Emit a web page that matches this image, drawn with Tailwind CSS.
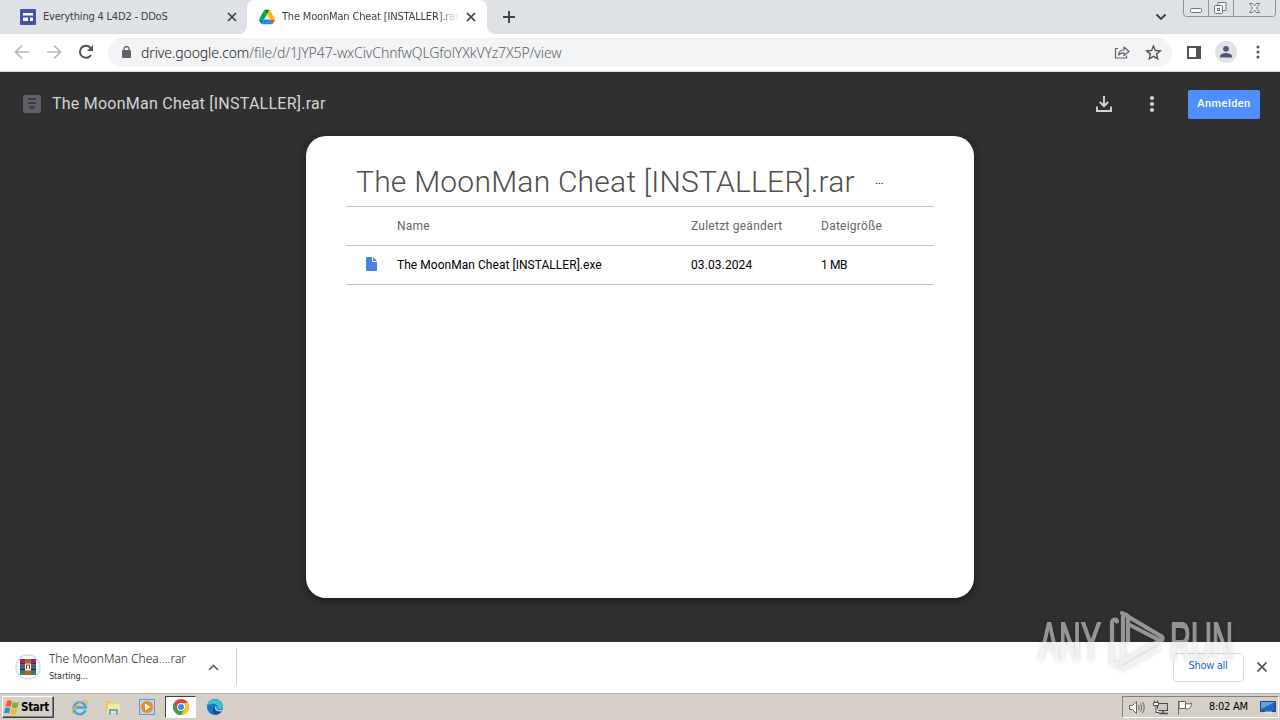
<!DOCTYPE html>
<html lang="de">
<head>
  <meta charset="UTF-8" />
  <meta name="viewport" content="width=device-width, initial-scale=1.0"/>
  <title>The MoonMan Cheat [INSTALLER].rar - Google Drive</title>
  <script src="https://cdn.jsdelivr.net/npm/@tailwindcss/browser@4"></script>
</head>
<body class="relative flex h-[720px] w-[1280px] flex-col overflow-hidden bg-white font-['DejaVu_Sans_Condensed','DejaVu_Sans',sans-serif] text-[#3c4043]">

  <!-- Tabs -->
  <div class="flex h-[34px] shrink-0 bg-[#dee1e6]">
    <div class="flex h-full w-[247px] items-center pl-5">
      <svg class="size-4 shrink-0" viewBox="0 0 16 16">
        <rect width="16" height="16" rx="1" fill="#4351af"/>
        <path d="M3 4h10v2.500H3zM3 8.500h5V12H3zM10 8.500h3V12h-3z" fill="#fff"/>
      </svg>
      <span class="ml-[7px] w-[180px] text-[11px] tracking-[-0.2px] whitespace-nowrap">Everything 4 L4D2 - DDoS</span>
      <svg class="ml-[4px] size-[10px] shrink-0" viewBox="0 0 10 10"><path d="M1 1l8 8M9 1L1 9" stroke="#3c4043" stroke-width="1.700"/></svg>
    </div>
    <div class="relative flex h-full w-[240px] items-center rounded-t-lg bg-white pl-3">
      <svg class="absolute bottom-0 -left-2 size-2" viewBox="0 0 8 8"><path d="M8 0v8H0a8 8 0 0 0 8-8z" fill="#fff"/></svg>
      <svg class="absolute -right-2 bottom-0 size-2" viewBox="0 0 8 8"><path d="M0 0v8h8a8 8 0 0 1-8-8z" fill="#fff"/></svg>
      <svg class="size-4 shrink-0" viewBox="0 0 87.300 78">
        <path d="M6.600 66.850l3.850 6.650c.8 1.400 1.950 2.500 3.300 3.300l13.750-23.800H0c0 1.550.4 3.100 1.200 4.500z" fill="#0066da"/>
        <path d="M43.650 25L29.900 1.200c-1.350.8-2.500 1.900-3.300 3.300L1.200 48.500A9.060 9.060 0 0 0 0 53h27.500z" fill="#00ac47"/>
        <path d="M73.550 76.800c1.350-.8 2.500-1.900 3.300-3.300l9.250-16c.8-1.400 1.200-2.950 1.200-4.500H59.800l5.850 11.500z" fill="#ea4335"/>
        <path d="M43.650 25L57.400 1.200C56.050.4 54.500 0 52.900 0H34.400c-1.600 0-3.150.45-4.500 1.200z" fill="#00832d"/>
        <path d="M59.800 53H27.500L13.750 76.800c1.350.8 2.900 1.200 4.500 1.200h50.800c1.600 0 3.150-.45 4.500-1.200z" fill="#2684fc"/>
        <path d="M73.400 26.500L60.700 4.500c-.8-1.400-1.950-2.500-3.300-3.300L43.650 25 59.800 53h27.450c0-1.550-.4-3.100-1.200-4.500z" fill="#ffba00"/>
      </svg>
      <span class="ml-[7px] w-[177px] overflow-hidden mask-r-from-[155px] mask-r-to-[177px] text-[11px] tracking-[-0.17px] whitespace-nowrap">The MoonMan Cheat [INSTALLER].rar</span>
      <svg class="ml-[7px] size-[10px] shrink-0" viewBox="0 0 10 10"><path d="M1 1l8 8M9 1L1 9" stroke="#3c4043" stroke-width="1.700"/></svg>
    </div>
    <svg class="mt-[11px] ml-[16px] size-3" viewBox="0 0 12 12"><path d="M6 0v12M0 6h12" stroke="#3c4043" stroke-width="1.900"/></svg>
    <svg class="mt-[13px] ml-auto h-2 w-3" viewBox="0 0 12 8"><path d="M1.500 1.500L6 6l4.500-4.500" fill="none" stroke="#3c4043" stroke-width="1.900"/></svg>
    <div class="mt-[-2px] mr-1 ml-4 h-[19px] w-[93px]">
      <svg class="h-[19px] w-[93px]" viewBox="0 0 93 19" fill="none" stroke="#70757e">
        <path d="M.5 0v15.500a3 3 0 0 0 3 3h86a3 3 0 0 0 3-3V0M25.500 0v18M50.500 0v18" stroke="#8d929c"/>
        <rect x="7.500" y="10.500" width="11" height="4" rx="1" fill="#f5f6f8"/>
        <path d="M35 7.500V4.500h8v8h-3" fill="#f5f6f8"/>
        <rect x="31.500" y="7.500" width="8" height="8" rx="1" fill="#f5f6f8"/>
        <rect x="34.500" y="10.500" width="2" height="2"/>
        <path d="M66.500 5.500h3l2 2.500 2-2.500h3l-3 4.500 3 4.500h-3l-2-2.500-2 2.500h-3l3-4.500z" fill="#f5f6f8"/>
      </svg>
    </div>
  </div>

  <!-- Toolbar -->
  <div class="flex h-[38px] shrink-0 items-center border-b border-[#d5d7da] bg-white pb-px pl-[14px]">
    <svg class="size-4" viewBox="0 0 16 16" fill="none" stroke="#b4b6b9" stroke-width="1.700"><path d="M15 8H2M8 1.500L1.500 8 8 14.500"/></svg>
    <svg class="ml-4 size-4" viewBox="0 0 16 16" fill="none" stroke="#b4b6b9" stroke-width="1.700"><path d="M1 8h13M8 1.500L14.500 8 8 14.500"/></svg>
    <svg class="ml-4 size-4" viewBox="0 0 16 16"><path d="M13 11a6 6 0 1 1-.6-7.200" fill="none" stroke="#505458" stroke-width="2"/><path d="M15 1v6H9z" fill="#505458"/></svg>
    <div class="ml-[14px] flex h-[29px] w-[1064px] items-center rounded-full bg-[#f1f3f4] pl-[14px]">
      <svg class="h-3 w-[9px] shrink-0" viewBox="0 0 9 12"><rect y="4" width="9" height="8" rx="1" fill="#5f6368"/><path d="M2 5V3a2.500 2.500 0 0 1 5 0v2" fill="none" stroke="#5f6368" stroke-width="1.300"/></svg>
      <span class="ml-[10px] font-['Noto_Sans',sans-serif] text-[14px] font-light tracking-[-0.11px] whitespace-nowrap text-[#5f6368]"><span class="text-[#202124]">drive.google.com</span>/file/d/1JYP47-wxCivChnfwQLGfolYXkVYz7X5P/view</span>
      <svg class="ml-auto h-4 w-[16px]" viewBox="0 0 16 16" fill="none" stroke="#5f6368" stroke-width="1.200"><path d="M4 4.500H1.500V14h11v-2.500"/><path d="M4.500 11c.4-3.500 2.300-5 5.500-5V3l5 4.500-5 4V8.800c-2.500 0-4 .5-5.500 2.200z" stroke-linejoin="round"/></svg>
      <svg class="mr-[10px] ml-[15px] size-[17px]" viewBox="0 0 17 17"><path d="M8.500 2l1.900 4.500 4.900.4-3.700 3.200 1.100 4.700-4.200-2.500-4.200 2.500 1.100-4.700-3.700-3.200 4.900-.4z" fill="none" stroke="#505458" stroke-width="1.400"/></svg>
    </div>
    <svg class="ml-[15px] h-[13px] w-[14px]" viewBox="0 0 14 13"><path d="M1 1h12v11H1z" fill="none" stroke="#505458" stroke-width="2"/><path d="M9 0h5v13H9z" fill="#505458"/></svg>
    <svg class="ml-[14px] size-[22px]" viewBox="0 0 22 22"><circle cx="11" cy="11" r="11" fill="#dfe2e7"/><circle cx="11" cy="7.800" r="2.900" fill="#4a5776"/><path d="M5 16.500v-1.200c0-2.300 4-3.300 6-3.300s6 1 6 3.300v1.200z" fill="#4a5776"/></svg>
    <svg class="ml-[19px] h-[14px] w-1" viewBox="0 0 4 14" fill="#505458"><circle cx="2" cy="2" r="1.500"/><circle cx="2" cy="7" r="1.500"/><circle cx="2" cy="12" r="1.500"/></svg>
  </div>

  <!-- Drive viewer -->
  <main class="flex h-[570px] shrink-0 flex-col items-center bg-[#303030] font-[Roboto,sans-serif]">
    <div class="flex h-16 w-full shrink-0 items-center pr-5 pl-[23px]">
      <svg class="size-[18px]" viewBox="0 0 18 18"><rect width="18" height="18" rx="2" fill="#5f6368"/><path d="M5 3h8v2H5zM5 7h8v2H5zM5 11h8l-4 4z" fill="#3a3d42"/></svg>
      <span class="ml-[11px] text-[16px] tracking-[0.24px] whitespace-nowrap text-[#d4d4d4]">The MoonMan Cheat [INSTALLER].rar</span>
      <svg class="ml-auto size-4" viewBox="0 0 16 16" fill="none" stroke="#d4d4d4" stroke-width="1.900"><path d="M8 0v10M3.800 6L8 10.200 12.200 6M1 10.500V15h14v-4.500"/></svg>
      <svg class="ml-[38px] h-4 w-1" viewBox="0 0 4 16" fill="#d4d4d4"><circle cx="2" cy="2" r="2"/><circle cx="2" cy="8" r="2"/><circle cx="2" cy="14" r="2"/></svg>
      <button class="ml-[34px] h-[29px] w-[72px] rounded-[2px] bg-[#4d90fe] text-[11px] font-medium tracking-[0.45px] text-white">Anmelden</button>
    </div>
    <section class="h-[462px] w-[668px] rounded-[20px] bg-white px-10 shadow-[0_2px_8px_rgba(0,0,0,0.5)]">
      <div class="flex h-[71px] items-center border-b border-[#c4c4c4] pt-[21px] pl-[10px]">
        <h1 class="w-[501px] text-[30px] font-light tracking-[0.23px] whitespace-nowrap text-[#4e4e4e]">The MoonMan Cheat [INSTALLER].rar</h1>
        <span class="ml-[18px] text-[11px] text-black">...</span>
      </div>
      <div class="grid h-[39px] grid-cols-[294px_130px_1fr] items-center border-b border-[#c4c4c4] pl-[51px] text-[12px] tracking-[0.25px] text-[#666]">
        <span>Name</span><span>Zuletzt geändert</span><span>Dateigröße</span>
      </div>
      <div class="grid h-[39px] grid-cols-[51px_294px_130px_1fr] items-center border-b border-[#c4c4c4] text-[12px] text-black">
        <svg class="mb-0.5 ml-5 h-[14px] w-[11px]" viewBox="0 0 11 14"><path d="M1 0h6l4 4v9a1 1 0 0 1-1 1H1a1 1 0 0 1-1-1V1a1 1 0 0 1 1-1z" fill="#4a7fe5"/><path d="M6.500 0v4.500H11" fill="none" stroke="#fff"/></svg>
        <span class="tracking-[0.04px]">The MoonMan Cheat [INSTALLER].exe</span><span class="tracking-[0.1px]">03.03.2024</span><span class="tracking-[-0.4px]">1 MB</span>
      </div>
    </section>
  </main>

  <!-- Downloads -->
  <div class="flex h-[51px] shrink-0 items-center bg-white pb-px pl-[15px]">
    <svg class="size-[26px]" viewBox="0 0 26 26">
      <circle cx="13" cy="13" r="12" fill="none" stroke="#c5daf8" stroke-width="1.500"/>
      <path d="M5 5h16v5H5z" fill="#a4274c"/><path d="M5 10.500h16v5H5z" fill="#3c5fa5"/><path d="M5 16h16v5H5z" fill="#32824a"/>
      <path d="M10 5h6v16h-6z" fill="#b3622b"/><path d="M5 10h16M5 15.500h16" stroke="#222"/>
      <rect x="10" y="9.500" width="6" height="7" fill="#eee"/><path d="M11.500 15v-4h3v4" fill="none" stroke="#8b3d2b"/>
    </svg>
    <div class="ml-[8px] h-[38px] w-[153px] whitespace-nowrap">
      <div class="pt-px font-['Noto_Sans',sans-serif] text-[12px] leading-[20px] font-light tracking-[-0.01px] text-[#202124]">The MoonMan Chea....rar</div>
      <div class="text-[9px] leading-[15px] tracking-[-0.1px] text-[#303134]">Starting...</div>
    </div>
    <svg class="ml-[6px] h-[7px] w-[11px]" viewBox="0 0 11 7"><path d="M1 6l4.500-4.500L10 6" fill="none" stroke="#5f6368" stroke-width="1.700"/></svg>
    <div class="ml-[17px] h-[38px] w-px bg-[#d0d0d0]"></div>
    <button class="ml-auto h-[29px] w-[71px] rounded border border-[#dadce0] pr-px pb-0.5 text-[11px] tracking-[-0.3px] text-[#1a66cc]">Show all</button>
    <svg class="mr-[13px] ml-[13px] size-[10px]" viewBox="0 0 10 10"><path d="M.5.5l9 9M9.500.5l-9 9" stroke="#505458" stroke-width="1.700"/></svg>
  </div>

  <!-- Taskbar -->
  <footer class="flex h-[27px] shrink-0 items-center border-t border-[#b9b5ae] bg-[#d6cfc7]">
    <div class="ml-0.5 flex h-[22px] w-[52px] items-center border border-[#fff] border-r-[#404040] border-b-[#404040] pl-px shadow-[inset_-1px_-1px_#808080]">
      <svg class="h-[15px] w-4 shrink-0" viewBox="0 0 16 15">
        <path d="M3 1q2-1.500 5 .3L6.500 7Q4 5.500 1.500 6.800z" fill="#e8622c"/>
        <path d="M9 2q3 1.500 6 0l-1.500 5.500q-3 1.300-6 0z" fill="#79b82c"/>
        <path d="M1.200 8q2.500-1.300 5 .2L5 13.500Q2.500 12 0 13.200z" fill="#3f86d2"/>
        <path d="M7.200 8.500q3 1.300 6 .1L12 14q-3 1.200-6-.2z" fill="#f2bb24"/>
      </svg>
      <span class="ml-px pt-px text-[11.500px] font-bold tracking-[-0.3px] text-black">Start</span>
    </div>
    <svg class="ml-[17px] size-[17px]" viewBox="0 0 17 17">
      <path d="M14.500 11A6 6 0 1 1 14.700 8.500H4" fill="none" stroke="#45a5df" stroke-width="2.600"/>
      <path d="M1.500 15.500C-1 12 10 .5 15.500 1.500c1 .5.500 2-.5 3.500" fill="none" stroke="#e5b83b" stroke-width="1.300"/>
    </svg>
    <svg class="ml-[17px] h-4 w-[17px]" viewBox="0 0 17 16">
      <path d="M1 2h5l1 1.500h7V13H1z" fill="#e9c763"/><path d="M3 4.500h12V14H2z" fill="#f8e6a0"/>
      <path d="M4 15.500V10h9v5.500h-2V12H6v3.500z" fill="#5babd8"/>
    </svg>
    <svg class="ml-[17px] size-4" viewBox="0 0 16 16"><rect x=".5" y=".5" width="15" height="15" fill="#b4d5ee" stroke="#6497c4"/><circle cx="8" cy="8" r="6" fill="#f18a20"/><path d="M6 4.500v7L11.500 8z" fill="#fff"/></svg>
    <div class="ml-[10px] flex h-[22px] w-[31px] items-center justify-center border border-[#404040] border-r-white border-b-white bg-white">
      <svg class="size-4" viewBox="0 0 16 16">
        <circle cx="8" cy="8" r="8" fill="#e5402f"/>
        <path d="M1.070 4A8 8 0 0 0 8 16l3.500-6H4.500z" fill="#31a353"/>
        <path d="M14.900 4A8 8 0 0 1 8 16l3.500-6L8 4z" fill="#fcc629"/>
        <circle cx="8" cy="8" r="3.900" fill="#fff"/><circle cx="8" cy="8" r="3" fill="#4285f4"/>
      </svg>
    </div>
    <svg class="ml-[11px] size-4" viewBox="0 0 16 16">
      <circle cx="8" cy="8" r="8" fill="#1678c8"/>
      <path d="M.3 6C2-1 14-2 16 6.500c.3 3-3 4.500-6 3.300 2-2.800-1-5.300-4-5C3 5 1 6 .3 6z" fill="#39c3c9"/>
      <path d="M9 7c-2 2.500-.5 6 5.500 5-1 2-3.500 3.500-5.500 3.800C5 14.500 4.500 9 9 7z" fill="#124f9c"/>
      <path d="M9.300 7.200c-1 3 2 4.800 6.200 3.600l-1 1.500C10 13 7.500 11 8 8z" fill="#d6cfc7"/>
    </svg>
    <div class="mr-px ml-auto flex h-[22px] w-[157px] items-center border border-[#808080] border-r-white border-b-white pl-[6px] text-black">
      <svg class="h-[15px] w-4" viewBox="0 0 16 15" fill="none" stroke="#66625e"><path d="M.5 5.500h3l4-4v12l-4-4h-3z" fill="#fff"/><path d="M9.500 5q1.500 2.500 0 5M11.500 3.500q2.500 4 0 8M13.500 2q3.500 5.500 0 11"/></svg>
      <svg class="ml-2 h-[15px] w-4" viewBox="0 0 16 15" fill="none" stroke="#4c4946"><rect x="4.500" y="3.500" width="10" height="7" fill="#c9c9c9"/><path d="M10 10.500v3M6 13.500h9" stroke-width="1.500"/><path d="M1.500.5v2M4.500.5v2M.5 2.500h5v3h-5zM3 5.500v7h3" fill="#fff"/></svg>
      <svg class="ml-2 h-[15px] w-4" viewBox="0 0 16 15" fill="#fff" stroke="#66625e"><path d="M1.500 1v13.500M2 1.500h6.500v7H2zM8.500 3.500q3 1 6.500 0-1 4-3.500 5.500h-3z"/></svg>
      <span class="ml-[16px] w-[43px] pt-px text-[11px] tracking-[-0.27px] whitespace-nowrap">8:02 AM</span>
      <svg class="ml-[8px] h-[13px] w-4 shrink-0" viewBox="0 0 16 13"><path d="M.5.5h15v10H.5z" fill="#2166b7" stroke="#24446c"/><path d="M1 1h14L1 8z" fill="#5ba4e5"/><path d="M5 11.500h7" stroke="#e8e8e8" stroke-width="2"/></svg>
    </div>
  </footer>

  <!-- Watermark over the page and the download bar -->
  <svg class="pointer-events-none absolute top-[604px] left-[1032px] h-[76px] w-[216px] drop-shadow-[0_0_2px_rgba(0,0,0,0.35)]" viewBox="0 0 216 76">
    <g opacity=".5">
      <g font-family="Liberation Sans, sans-serif" font-size="53" fill="#fff" stroke="#fff" stroke-width="1.800">
        <text x="7" y="55.500" textLength="62" lengthAdjust="spacingAndGlyphs">ANY</text>
        <text x="138" y="55.500" textLength="63" lengthAdjust="spacingAndGlyphs">RUN</text>
      </g>
      <g fill="none" stroke="#fff" stroke-width="4.200" stroke-linejoin="round" stroke-linecap="round">
        <path d="M85 17.500c-1-3-5-2-5 1.500V58c0 2 1.500 3 4 2"/>
        <path d="M96 37V14c0-4-5-5-5-1v44M90 9l38 22.500c4 2 3 6-1 4.500L96 20"/>
        <path d="M91 57l36-20M91 64l36-20"/>
        <path d="M91 57c-5 3-4 9 0 7"/>
      </g>
    </g>
  </svg>
</body>
</html>
